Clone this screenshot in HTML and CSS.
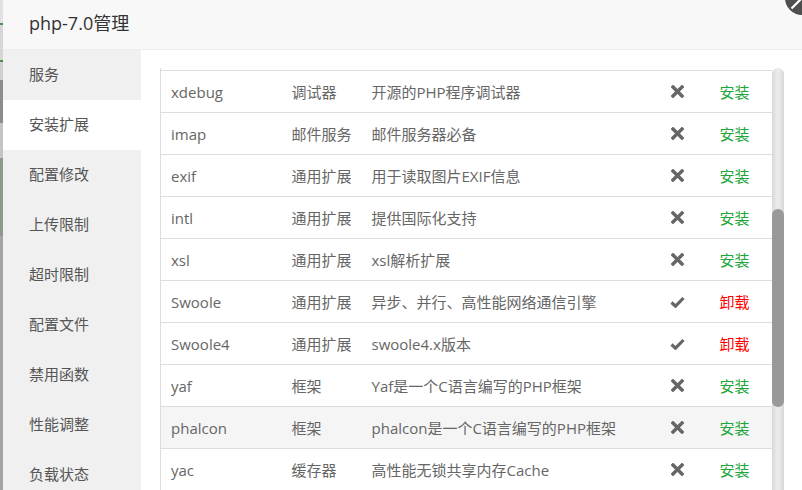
FILE: index.html
```html
<!DOCTYPE html>
<html lang="zh-CN">
<head>
<meta charset="utf-8">
<title>php-7.0管理</title>
<link rel="stylesheet" href="styles.css">
</head>
<body>
<div class="backdrop"></div>
<div class="modal">
  <div class="header">php-7.0管理</div>
  <div class="main">
    <ul class="menu">
      <li>服务</li>
      <li class="active">安装扩展</li>
      <li>配置修改</li>
      <li>上传限制</li>
      <li>超时限制</li>
      <li>配置文件</li>
      <li>禁用函数</li>
      <li>性能调整</li>
      <li>负载状态</li>
    </ul>
    <div class="content">
      <div class="scroller">
        <div class="tablewrap">
          <table class="ext">
            <colgroup><col class="c1"><col class="c2"><col class="c3"><col class="c4"><col class="c5"></colgroup>
            <tbody>
              <tr class="spacer"><td></td><td></td><td></td><td></td><td></td></tr>
              <tr><td>xdebug</td><td>调试器</td><td>开源的PHP程序调试器</td><td><svg class="ico" width="13" height="13" viewBox="0 0 13 13"><path d="M2 2L11 11M11 2L2 11"/></svg></td><td class="install">安装</td></tr>
              <tr><td>imap</td><td>邮件服务</td><td>邮件服务器必备</td><td><svg class="ico" width="13" height="13" viewBox="0 0 13 13"><path d="M2 2L11 11M11 2L2 11"/></svg></td><td class="install">安装</td></tr>
              <tr><td>exif</td><td>通用扩展</td><td>用于读取图片EXIF信息</td><td><svg class="ico" width="13" height="13" viewBox="0 0 13 13"><path d="M2 2L11 11M11 2L2 11"/></svg></td><td class="install">安装</td></tr>
              <tr><td>intl</td><td>通用扩展</td><td>提供国际化支持</td><td><svg class="ico" width="13" height="13" viewBox="0 0 13 13"><path d="M2 2L11 11M11 2L2 11"/></svg></td><td class="install">安装</td></tr>
              <tr><td>xsl</td><td>通用扩展</td><td>xsl解析扩展</td><td><svg class="ico" width="13" height="13" viewBox="0 0 13 13"><path d="M2 2L11 11M11 2L2 11"/></svg></td><td class="install">安装</td></tr>
              <tr><td>Swoole</td><td>通用扩展</td><td>异步、并行、高性能网络通信引擎</td><td><svg class="ico chk" width="15" height="12" viewBox="0 0 15 12"><path d="M1.5 6.5L5.5 10.2L13.5 2"/></svg></td><td class="uninstall">卸载</td></tr>
              <tr><td>Swoole4</td><td>通用扩展</td><td>swoole4.x版本</td><td><svg class="ico chk" width="15" height="12" viewBox="0 0 15 12"><path d="M1.5 6.5L5.5 10.2L13.5 2"/></svg></td><td class="uninstall">卸载</td></tr>
              <tr><td>yaf</td><td>框架</td><td>Yaf是一个C语言编写的PHP框架</td><td><svg class="ico" width="13" height="13" viewBox="0 0 13 13"><path d="M2 2L11 11M11 2L2 11"/></svg></td><td class="install">安装</td></tr>
              <tr class="hover"><td>phalcon</td><td>框架</td><td>phalcon是一个C语言编写的PHP框架</td><td><svg class="ico" width="13" height="13" viewBox="0 0 13 13"><path d="M2 2L11 11M11 2L2 11"/></svg></td><td class="install">安装</td></tr>
              <tr><td>yac</td><td>缓存器</td><td>高性能无锁共享内存Cache</td><td><svg class="ico" width="13" height="13" viewBox="0 0 13 13"><path d="M2 2L11 11M11 2L2 11"/></svg></td><td class="install">安装</td></tr>
            </tbody>
          </table>
        </div>
        <div class="track"><div class="thumb"></div></div>
      </div>
    </div>
  </div>
  <svg class="close" width="18" height="16" viewBox="0 0 18 16"><circle cx="18" cy="-2" r="17" fill="#4f4f4f"/><path d="M18 -2L7.5 8.5" stroke="#fff" stroke-width="2.2"/></svg>
</div>
</body>
</html>
```
FILE: styles.css
```css
html, body {
  margin: 0;
  padding: 0;
}
body {
  width: 802px;
  height: 490px;
  overflow: hidden;
  display: flex;
  font-family: "Open Sans", "Noto Sans CJK SC", sans-serif;
}
.backdrop {
  width: 3px;
  flex: none;
  background: linear-gradient(to bottom,
    #e2e2e2 0, #e2e2e2 23px, #4a8f4a 23px, #4a8f4a 25px, #d6d6d6 25px, #d6d6d6 60px,
    #4a8f4a 60px, #4a8f4a 62px, #cfcfcf 62px, #cfcfcf 80px, #8c8c8c 80px, #8c8c8c 123px,
    #c4c4c4 123px, #c4c4c4 158px, #8d9a8a 158px, #8d9a8a 236px, #a3a3a3 236px);
}
.modal {
  position: relative;
  width: 799px;
  height: 490px;
  background: #fff;
  overflow: hidden;
}
.header {
  height: 49px;
  line-height: 47px;
  border-bottom: 1px solid #eee;
  background: #f8f8f8;
  padding-left: 26px;
  font-size: 18px;
  color: #333;
}
.main {
  display: flex;
  height: 440px;
}
.menu {
  list-style: none;
  margin: 0;
  padding: 0;
  width: 138px;
  flex: none;
  background: #f0f0f0;
}
.menu li {
  height: 50px;
  line-height: 49px;
  padding-left: 26px;
  font-size: 15px;
  color: #555;
}
.menu li.active {
  background: #fff;
}
.content {
  flex: 1;
  padding: 18px 0 0 19px;
}
.scroller {
  display: flex;
  height: 422px;
}
.tablewrap {
  width: 612px;
  overflow: hidden;
}
.ext {
  width: 612px;
  table-layout: fixed;
  border-collapse: collapse;
  font-size: 15px;
  color: #666;
}
.c1 { width: 121px; }
.c2 { width: 80px; }
.c3 { width: 299px; }
.c4 { width: 49px; }
.c5 { width: 63px; }
.ext td {
  height: 41px;
  padding: 0 0 0 10px;
  border: 1px solid #ddd;
  border-top: 0;
  text-align: left;
  white-space: nowrap;
  vertical-align: middle;
  line-height: 20px;
}
.ext td + td {
  border-left: 0;
}
.ext td:not(:last-child) {
  border-right: 0;
}
.ext tr.spacer td {
  height: 2px;
  padding: 0;
  line-height: 0;
  font-size: 0;
}
.ext tr.hover td {
  background: #f5f5f5;
}
.ico {
  display: block;
  fill: none;
  stroke: #666;
  stroke-width: 3.4;
  stroke-linecap: square;
}
.ico.chk {
  stroke-width: 3.2;
  stroke-linecap: butt;
  margin-left: -1px;
}
.install { color: #20a53a; }
.uninstall { color: #ff0000; }
.track {
  width: 12px;
  flex: none;
  border-radius: 6px 6px 0 0;
  background: linear-gradient(to right, #d8d8d8, #ececec 45%, #e4e4e4 75%, #d6d6d6);
  padding-top: 141px;
  height: 500px;
}
.thumb {
  height: 198px;
  border-radius: 6px;
  background: #999;
}
.close {
  position: absolute;
  top: 0;
  right: 0;
}
```
